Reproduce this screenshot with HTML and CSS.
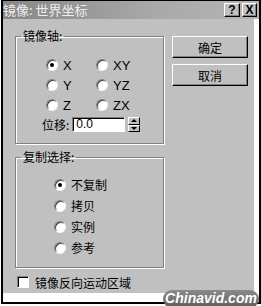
FILE: index.html
```html
<html>
  <head>
    <link rel="stylesheet" href="styles.css">
  </head>
  <body>
    <div class="win">
      <div class="title">
        <span class="caption">镜像: 世界坐标</span>
        <span class="tbtn">?</span>
        <span class="tbtn x">X</span>
      </div>
      <div class="main">
        <div class="left">
          <fieldset class="grp g1">
            <legend>镜像轴:</legend>
            <div class="axes">
              <label class="opt"><span class="radio on"></span>X</label>
              <label class="opt"><span class="radio"></span>XY</label>
              <label class="opt"><span class="radio"></span>Y</label>
              <label class="opt"><span class="radio"></span>YZ</label>
              <label class="opt"><span class="radio"></span>Z</label>
              <label class="opt"><span class="radio"></span>ZX</label>
            </div>
            <div class="shift">
              <span>位移:</span>
              <span class="field">0.0</span>
              <span class="spin"><span class="up"></span><span class="dn"></span></span>
            </div>
          </fieldset>
          <fieldset class="grp g2">
            <legend>复制选择:</legend>
            <div class="copies">
              <label class="opt row"><span class="radio on"></span>不复制</label>
              <label class="opt row"><span class="radio"></span>拷贝</label>
              <label class="opt row"><span class="radio"></span>实例</label>
              <label class="opt row"><span class="radio"></span>参考</label>
            </div>
          </fieldset>
          <label class="check"><span class="box"></span>镜像反向运动区域</label>
        </div>
        <div class="right">
          <button class="btn">确定</button>
          <button class="btn">取消</button>
        </div>
      </div>
    </div>
    <div class="mark">Chinavid.com</div>
  </body>
</html>
```

FILE: styles.css
```css
*{
  box-sizing: border-box;
}
body{
  margin: 0;
  background: #fff;
  font-family: "Noto Sans CJK SC", "Liberation Sans", sans-serif;
  font-size: 12px;
  color: #000;
  position: relative;
  height: 306px;
  overflow: hidden;
}
.win{
  margin-left: 1px;
  width: 260px;
  height: 304px;
  border-left: 2px solid #000;
  border-right: 2px solid #000;
  border-top: 1px solid #000;
  border-bottom: 2px solid #000;
}
.title{
  height: 18px;
  display: flex;
  align-items: center;
  gap: 2px;
  padding-right: 2px;
  background: linear-gradient(90deg, #878787, #a9a9a9 60%, #b4b4b4);
}
.caption{
  color: #eee;
  font-size: 13px;
  line-height: 18px;
  margin-right: auto;
}
.tbtn{
  width: 16px;
  height: 14px;
  background: #c0c0c0;
  border: 1px solid;
  border-color: #fff #000 #000 #fff;
  box-shadow: inset -1px -1px 0 #808080;
  font-family: "Liberation Sans", sans-serif;
  font-weight: bold;
  font-size: 12px;
  line-height: 12px;
  text-align: center;
}
.tbtn.x{
  width: 15px;
}
.main{
  display: flex;
  height: 274px;
  margin-right: 5px;
  background: #c0c0c0;
}
.left{
  padding-left: 12px;
  padding-top: 10px;
}
.grp{
  margin: 0;
  padding: 0;
  width: 149px;
  min-width: 0;
  border: 1px solid #808080;
  box-shadow: 1px 1px 0 #fff, inset 1px 1px 0 #fff;
}
.grp legend{
  margin-left: 5px;
  padding: 0 2px;
  line-height: 14px;
  font-size: 12px;
}
.g1{
  padding: 12px 0 11px 0;
}
.axes{
  display: grid;
  grid-template-columns: 50px 50px;
  grid-auto-rows: 20px;
  margin-left: 30px;
}
.opt{
  display: flex;
  align-items: center;
  gap: 5px;
  font-family: "Liberation Sans", "Noto Sans CJK SC", sans-serif;
  font-size: 13px;
}
.g2 .opt{
  font-family: "Noto Sans CJK SC", sans-serif;
  font-size: 12px;
}
.radio{
  width: 12px;
  height: 12px;
  border-radius: 50%;
  background: #fff;
  border: 1px solid;
  border-color: #808080 #f4f4f4 #f4f4f4 #808080;
  box-shadow: inset 1px 1px 0 #404040;
  display: flex;
  align-items: center;
  justify-content: center;
}
.radio.on::after{
  content: "";
  width: 4px;
  height: 4px;
  border-radius: 50%;
  background: #000;
}
.shift{
  display: flex;
  align-items: center;
  gap: 3px;
  margin: 2px 0 0 26px;
  height: 15px;
  font-size: 12px;
}
.field{
  width: 53px;
  height: 15px;
  background: #fff;
  border: 1px solid;
  border-color: #808080 #fff #fff #808080;
  box-shadow: inset 1px 1px 0 #000;
  padding: 0 3px;
  font-family: "Liberation Sans", sans-serif;
  line-height: 13px;
}
.spin{
  width: 12px;
  height: 15px;
  display: flex;
  flex-direction: column;
}
.spin span{
  flex: 1;
  background: #c0c0c0;
  border: 1px solid;
  border-color: #fff #000 #000 #fff;
  display: flex;
  align-items: center;
  justify-content: center;
}
.spin .up::after{
  content: "";
  border: 3px solid transparent;
  border-top: 0;
  border-bottom: 3px solid #000;
}
.spin .dn::after{
  content: "";
  border: 3px solid transparent;
  border-bottom: 0;
  border-top: 3px solid #000;
}
.g2{
  margin-top: 6px;
  padding: 10px 0 9px 0;
}
.copies{
  margin-left: 38px;
}
.row{
  height: 21px;
}
.check{
  display: flex;
  align-items: center;
  gap: 6px;
  margin: 7px 0 0 2px;
  height: 14px;
  font-size: 12px;
}
.box{
  width: 12px;
  height: 12px;
  background: #fff;
  border: 1px solid;
  border-color: #808080 #fff #fff #808080;
  box-shadow: inset 1px 1px 0 #000;
}
.right{
  display: flex;
  flex-direction: column;
  gap: 6px;
  margin-left: 8px;
  padding-top: 17px;
}
.btn{
  width: 76px;
  height: 22px;
  background: #c0c0c0;
  border: 1px solid;
  border-color: #fff #000 #000 #fff;
  box-shadow: inset -1px -1px 0 #808080;
  font-family: "Noto Sans CJK SC", sans-serif;
  font-size: 12px;
  padding: 0;
}
.mark{
  position: absolute;
  left: 163px;
  top: 290px;
  width: 96px;
  height: 18px;
  border-radius: 9px;
  background: linear-gradient(180deg, #8a8a8a, #5e5e5e);
  color: #fff;
  font-family: "Liberation Sans", sans-serif;
  font-weight: bold;
  font-style: italic;
  font-size: 14px;
  line-height: 17px;
  text-align: center;
}
```
